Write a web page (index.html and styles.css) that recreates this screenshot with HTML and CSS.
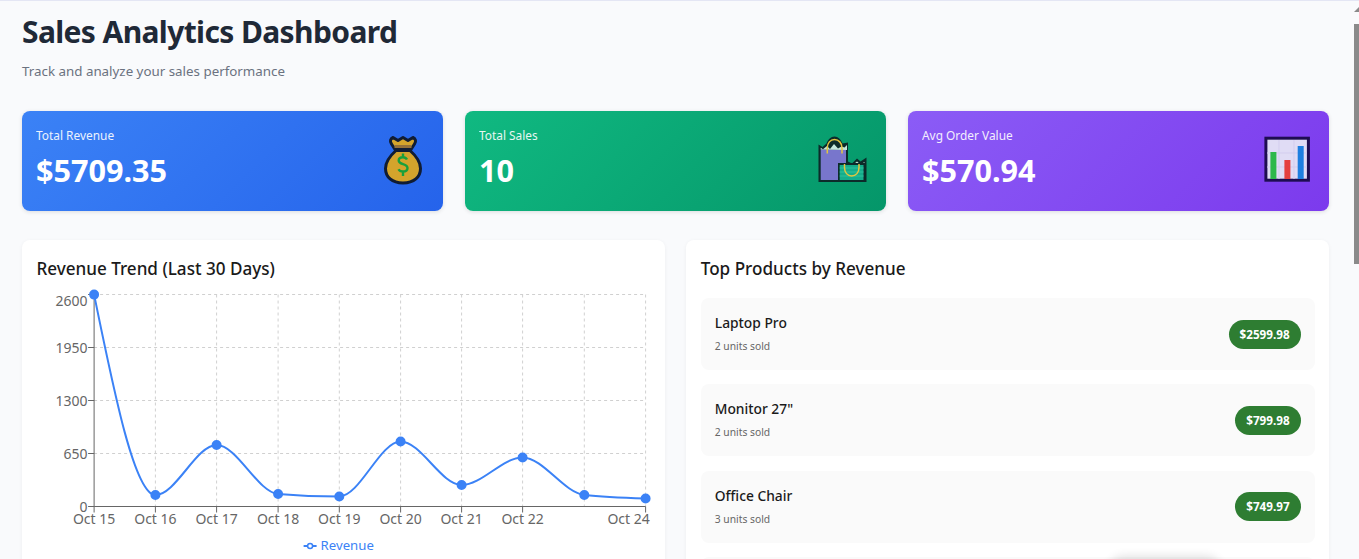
FILE: index.html
```html
<!DOCTYPE html>
<html lang="en">
<head>
<meta charset="utf-8">
<title>Sales Analytics Dashboard</title>
<link rel="stylesheet" href="styles.css">
</head>
<body>
<main class="page">
  <header class="head">
    <h1>Sales Analytics Dashboard</h1>
    <p>Track and analyze your sales performance</p>
  </header>

  <section class="stats">
    <article class="stat stat-blue">
      <div class="stat-text">
        <div class="stat-label">Total Revenue</div>
        <div class="stat-value">$5709.35</div>
      </div>
      <svg class="stat-icon" viewBox="0 0 54 54" aria-hidden="true">
        <path d="M28 49C17 49 10.500 43 10.500 34.500c0-8 6-14 10.500-18h14c4.500 4 10.500 10 10.500 18C45.500 43 39 49 28 49z" fill="#d4a42c" stroke="#101c33" stroke-width="3" stroke-linejoin="round"/>
        <path d="M18 3.500l5 3 5-3 5 3 5-3c2.500 1 3.500 4 1.500 6.500L36 15.500H20L16.500 10c-2-2.500-1-5.500 1.500-6.500z" fill="#d4a42c" stroke="#101c33" stroke-width="3" stroke-linejoin="round"/>
        <rect x="19.500" y="11" width="17" height="3" fill="#94703a"/>
        <path d="M32 25.500c-.8-1.500-2.300-2.300-4-2.300-2.600 0-4.300 1.300-4.300 3.300 0 4.700 8.800 2.500 8.800 7.500 0 2.200-1.900 3.500-4.500 3.500-2 0-3.700-.8-4.500-2.300M28 19.500v4M28 37v5" fill="none" stroke="#18a03c" stroke-width="2.400"/>
      </svg>
    </article>

    <article class="stat stat-green">
      <div class="stat-text">
        <div class="stat-label">Total Sales</div>
        <div class="stat-value">10</div>
      </div>
      <svg class="stat-icon" viewBox="0 0 54 54" aria-hidden="true">
        <path d="M29 48V27l5 2.500 5-5 3.500 3 6-4V48z" fill="#0c2b2a"/>
        <path d="M31 31l3 .5 5-4 3.500 3 4-2.500V32H31z" fill="#c4e6dc"/>
        <path d="M.5 48V10.500l4 2.500 4-3.500C10 5.500 13 2.500 16.500 2.500s6.500 3 8 7l5.500-1V48z" fill="#0c2b2a"/>
        <path d="M2.700 46V15.500H28V46z" fill="#7876cc"/>
        <path d="M2.700 15.500v-1.700l2.300 1.500 4-3.300 3 3 4-5 4 4.500 3.500-2 3 1 2.500-2.500v5z" fill="#c4e6dc"/>
        <path d="M9.300 19.500V14c0-5 3-8.500 7.200-8.500S24 9 24 14v5.500" fill="none" stroke="#e3c53f" stroke-width="1.500"/>
        <path d="M20 48V29h27.500v19z" fill="#0c2b2a"/>
        <path d="M21.700 31H45.500v15H21.700z" fill="#14ad8b"/>
        <path d="M21.700 34h23.800M21.700 38h23.800M21.700 42h23.800" stroke="#2cc29c" stroke-width="1.200"/>
        <path d="M26.500 30v3.500c0 5 3 8.500 7.200 8.500s7.300-3.500 7.300-8.500V30" fill="none" stroke="#e3c53f" stroke-width="1.500"/>
      </svg>
    </article>

    <article class="stat stat-purple">
      <div class="stat-text">
        <div class="stat-label">Avg Order Value</div>
        <div class="stat-value">$570.94</div>
      </div>
      <svg class="stat-icon" viewBox="0 0 54 54" aria-hidden="true">
        <rect x="4.900" y="4.200" width="42.500" height="42" fill="#e0dcf5" stroke="#1e0d52" stroke-width="3"/>
        <path d="M18 6v39M33 6v39M6 19h40M6 33h40" stroke="#d3cdee" stroke-width="1"/>
        <rect x="9.400" y="18" width="6" height="27" fill="#2db84a"/>
        <rect x="23.400" y="26" width="6" height="19" fill="#e53f3f"/>
        <rect x="36.700" y="12" width="6" height="33" fill="#1e7fe0"/>
      </svg>
    </article>
  </section>

  <section class="panels">
    <article class="panel">
      <h2>Revenue Trend (Last 30 Days)</h2>
      <svg class="chart" viewBox="36.400 287 613 272" role="img" aria-label="Revenue line chart">
        <g class="grid">
          <path d="M94.500 294.500H646M94.500 347.500H646M94.500 400.500H646M94.500 453.500H646"/>
          <path d="M155.800 294.500V506.500M217 294.500V506.500M278.500 294.500V506.500M339.700 294.500V506.500M401 294.500V506.500M462 294.500V506.500M523 294.500V506.500M584.700 294.500V506.500M646 294.500V506.500"/>
        </g>
        <path class="axis" d="M94.500 294.500V506.500H646M88.500 506.500H94.500M88.500 453.500H94.500M88.500 400.500H94.500M88.500 347.500H94.500M88.500 294.500H94.500M94.500 506.500V512.500M155.800 506.500V512.500M217 506.500V512.500M278.500 506.500V512.500M339.700 506.500V512.500M401 506.500V512.500M462 506.500V512.500M523 506.500V512.500M646 506.500V512.500"/>
        <g class="tick y-tick">
          <text x="88" y="300">2600</text>
          <text x="88" y="347">1950</text>
          <text x="88" y="400">1300</text>
          <text x="88" y="453">650</text>
          <text x="88" y="506">0</text>
        </g>
        <g class="tick x-tick">
          <text x="94.500" y="518">Oct 15</text>
          <text x="155.800" y="518">Oct 16</text>
          <text x="217" y="518">Oct 17</text>
          <text x="278.500" y="518">Oct 18</text>
          <text x="339.700" y="518">Oct 19</text>
          <text x="401" y="518">Oct 20</text>
          <text x="462" y="518">Oct 21</text>
          <text x="523" y="518">Oct 22</text>
          <text x="629" y="518">Oct 24</text>
        </g>
        <path class="line" d="M94.500 294.600C114.900 394.800 135.400 495 155.800 495C176.300 495 196.500 445 217 445C237.500 445 258 492.300 278.500 494C298.900 495.700 319.300 496.500 339.700 496.500C360.100 496.500 380.600 441.500 401 441.500C421.400 441.500 441.600 485 462 485C482.400 485 502.600 457.500 523 457.500C543.500 457.500 564.200 492.700 584.700 495C605 497.300 625.600 497.900 646 498.500"/>
        <g class="dots">
          <circle cx="94.500" cy="294.600" r="4"/>
          <circle cx="155.800" cy="495" r="4"/>
          <circle cx="217" cy="445" r="4"/>
          <circle cx="278.500" cy="494" r="4"/>
          <circle cx="339.700" cy="496.500" r="4"/>
          <circle cx="401" cy="441.500" r="4"/>
          <circle cx="462" cy="485" r="4"/>
          <circle cx="523" cy="457.500" r="4"/>
          <circle cx="584.700" cy="495" r="4"/>
          <circle cx="646" cy="498.500" r="4"/>
        </g>
        <path class="legend-mark" d="M304 546H317"/>
        <circle class="legend-dot" cx="310.500" cy="546" r="2.500"/>
        <text class="legend-text" x="321" y="544.500">Revenue</text>
      </svg>
    </article>

    <article class="panel">
      <h2>Top Products by Revenue</h2>
      <ul class="products">
        <li class="product">
          <div class="product-text"><div class="product-name">Laptop Pro</div><div class="product-units">2 units sold</div></div>
          <span class="badge">$2599.98</span>
        </li>
        <li class="product">
          <div class="product-text"><div class="product-name">Monitor 27"</div><div class="product-units">2 units sold</div></div>
          <span class="badge">$799.98</span>
        </li>
        <li class="product">
          <div class="product-text"><div class="product-name">Office Chair</div><div class="product-units">3 units sold</div></div>
          <span class="badge">$749.97</span>
        </li>
        <li class="product"></li>
      </ul>
    </article>
  </section>
</main>
<div class="toast"></div>
<div class="scroll-arrow"></div>
<div class="scroll-thumb"></div>
</body>
</html>
```

FILE: styles.css
```css
* { box-sizing: border-box; }
html, body { margin: 0; height: 559px; overflow: hidden; }
body {
  background: #f9fafc;
  border-top: 1px solid #e4e6f4;
  font-family: "Noto Sans", "Open Sans", sans-serif;
  color: #1f2937;
}
.page { padding: 11px 30px 0 22px; }
.head h1 { margin: 0; font-size: 30px; line-height: 40px; font-weight: 700; letter-spacing: -.62px; color: #1f2937; }
.head p { margin: 9px 0 0; font-size: 13.350px; line-height: 20px; color: #6b7280; }
.stats { display: grid; grid-template-columns: repeat(3, 1fr); gap: 22px; margin-top: 30px; }
.stat {
  height: 100px;
  padding: 14px;
  border-radius: 8px;
  color: #fff;
  display: flex;
  justify-content: space-between;
  align-items: center;
  box-shadow: 0 1px 4px rgba(0,0,0,.12);
}
.stat-blue { background: linear-gradient(135deg, #3b82f6, #2563eb); }
.stat-green { background: linear-gradient(135deg, #10b981, #059669); }
.stat-purple { background: linear-gradient(135deg, #8b5cf6, #7c3aed); }
.stat-text { padding-bottom: 7px; }
.stat-label { font-size: 11.900px; line-height: 18px; opacity: .9; }
.stat-value { margin-top: 6px; font-size: 30.600px; line-height: 40px; font-weight: 700; }
.stat-icon { width: 54px; height: 54px; flex: none; margin-right: .4px; }
.panels { display: grid; grid-template-columns: 1fr 1fr; gap: 21.760px; margin-top: 29px; }
.panel {
  min-width: 0;
  background: #fff;
  border-radius: 8px;
  padding: 17px 14.400px 14px;
  box-shadow: 0 1px 4px rgba(0,0,0,.05);
  min-height: 400px;
}
.panel h2 { margin: 0; font-size: 17.100px; line-height: 24px; font-weight: 500; color: #1a1a1a; }
.chart { display: block; width: 613px; height: 272px; margin-top: 6px; overflow: visible; }
.grid path { fill: none; stroke: #d0d0d0; stroke-width: 1; stroke-dasharray: 3 3; }
.axis { fill: none; stroke: #666; stroke-width: 1; }
.tick text { font-size: 14px; fill: #666; dominant-baseline: central; }
.y-tick text { text-anchor: end; }
.x-tick text { text-anchor: middle; }
.line { fill: none; stroke: #3b82f6; stroke-width: 2; }
.dots circle { fill: #3b82f6; stroke: #3b82f6; stroke-width: 2; }
.legend-mark { stroke: #3b82f6; stroke-width: 2; fill: none; }
.legend-dot { fill: #fff; stroke: #3b82f6; stroke-width: 1.500; }
.legend-text { font-size: 13.200px; fill: #3b82f6; dominant-baseline: central; }
.products { list-style: none; margin: 17px 0 0; padding: 0; display: flex; flex-direction: column; gap: 14.400px; }
.product {
  height: 72px;
  padding: 0 14px;
  background: #fafafa;
  border-radius: 8px;
  display: flex;
  justify-content: space-between;
  align-items: center;
}
.product-text { padding-bottom: 1px; }
.product-name { font-size: 13.800px; line-height: 18px; font-weight: 500; color: #1a1a1a; }
.product-units { margin-top: 7px; font-size: 10.300px; line-height: 14px; color: #666; }
.badge {
  background: #2e7d32;
  color: #fff;
  border-radius: 15px;
  padding: 0 11px;
  font-size: 11.700px;
  line-height: 29px;
  font-weight: 700;
}
.toast {
  position: fixed;
  left: 1110px;
  bottom: -30px;
  width: 110px;
  height: 30px;
  border-radius: 15px;
  box-shadow: 0 0 10px 3px rgba(0,0,0,.12);
}
.scroll-thumb {
  position: fixed;
  top: 24px;
  right: 0;
  width: 5px;
  height: 240px;
  background: #8a8a8a;
}
.scroll-arrow {
  position: fixed;
  top: 7px;
  right: 0;
  border-style: solid;
  border-width: 0 0 5px 5px;
  border-color: transparent transparent #8a8a8a transparent;
}
```
